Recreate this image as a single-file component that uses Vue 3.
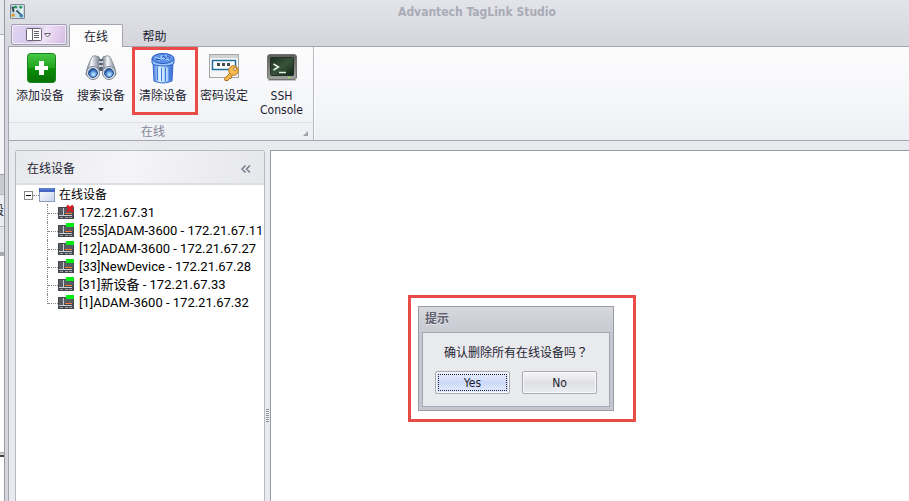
<script setup>
import { ref } from 'vue'

const title = 'Advantech TagLink Studio'
const expanded = ref(true)
const devices = [
  { name: '172.21.67.31', online: false },
  { name: '[255]ADAM-3600 - 172.21.67.119', online: true },
  { name: '[12]ADAM-3600 - 172.21.67.27', online: true },
  { name: '[33]NewDevice - 172.21.67.28', online: true },
  { name: '[31]新设备 - 172.21.67.33', online: true },
  { name: '[1]ADAM-3600 - 172.21.67.32', online: true },
]
</script>

<template>
  <div class="screen">
    <div class="behind" aria-hidden="true">
      <div class="behind-top"></div>
      <div class="behind-mid"></div>
      <div class="behind-head"></div>
      <div class="behind-row">段</div>
      <div class="behind-foot"></div>
      <div class="behind-list"></div>
      <div class="behind-end"></div>
    </div>

    <div class="window">
      <header class="titlebar">
        <svg class="app-icon" viewBox="0 0 14 14" aria-hidden="true">
          <rect x=".5" y=".5" width="13" height="13" rx="1" fill="#c3dfe9" stroke="#80878f" />
          <path d="M2 3h4l-3 4z" fill="#3a4850" stroke="#303e46" />
          <path d="M4 4l7 7M8 4h3v4" fill="none" stroke="#f5f7f8" stroke-width="2" />
          <path d="M6 6l5 5" stroke="#294858" stroke-width="1.5" />
          <circle cx="5" cy="3" r="1.3" fill="#219956" />
          <circle cx="10" cy="3" r="1.4" fill="#2c9555" />
          <circle cx="3" cy="10.500" r="1.6" fill="#e39b32" />
          <circle cx="10.5" cy="11" r="1.6" fill="#317eac" />
        </svg>
        <h1>{{ title }}</h1>
      </header>

      <nav class="tabs">
        <button class="app-menu" aria-label="Menu">
          <svg width="26" height="14" viewBox="0 0 26 14" aria-hidden="true">
            <rect x=".5" y=".5" width="15" height="12" rx="1" fill="#fdfcff" stroke="#68656f" />
            <path d="M6.500 1v11" stroke="#68656f" />
            <path d="M8 3.500h5M8 5.500h5M8 7.500h5M8 9.500h5" stroke="#68656f" />
            <path d="M18.500 5.500h6l-3 3.500z" fill="#fff" stroke="#68656f" />
          </svg>
        </button>
        <button class="tab active">在线</button>
        <button class="tab">帮助</button>
      </nav>

      <section class="ribbon">
        <div class="group">
          <div class="tools">
            <button class="tool">
              <svg viewBox="0 0 32 32" aria-hidden="true">
                <defs>
                  <linearGradient id="green" x2="0" y2="1">
                    <stop offset="0" stop-color="#48c848" /><stop offset=".48" stop-color="#22a41d" />
                    <stop offset=".52" stop-color="#0b8f09" /><stop offset="1" stop-color="#087006" />
                  </linearGradient>
                </defs>
                <rect x="3.500" y="1.500" width="28" height="29" rx="3" fill="url(#green)" stroke="#15841a" />
                <path d="M15 9h5v5h4v4h-4v5h-5v-5h-4v-4h4z" fill="#fff" />
              </svg>
              <span>添加设备</span>
            </button>
            <button class="tool">
              <svg viewBox="0 0 32 32" aria-hidden="true">
                <defs>
                  <linearGradient id="barrel"><stop offset="0" stop-color="#67717f" /><stop offset=".4" stop-color="#f5f7fa" /><stop offset="1" stop-color="#6c7786" /></linearGradient>
                  <radialGradient id="lens" cx=".55" cy=".65"><stop offset="0" stop-color="#d5efff" /><stop offset=".55" stop-color="#6ba8ea" /><stop offset="1" stop-color="#2d5ca8" /></radialGradient>
                </defs>
                <path d="M6 7q1-4 5-3 4 0 4 4l-1 15H1q0-6 5-16z" fill="url(#barrel)" stroke="#8b939e" />
                <path d="M26 7q-1-4-5-3-4 0-4 4l1 15h13q0-6-5-16z" fill="url(#barrel)" stroke="#8b939e" />
                <path d="M14.500 7h3v12h-3z" fill="#4f5865" />
                <path d="M14 10h4M14 14h4" stroke="#c3cad3" stroke-width="2" />
                <circle cx="8" cy="21" r="6.500" fill="#e4e9ee" stroke="#7b838f" />
                <circle cx="24" cy="21" r="6.500" fill="#e4e9ee" stroke="#7b838f" />
                <circle cx="8" cy="21" r="4.500" fill="url(#lens)" stroke="#2d538c" />
                <circle cx="24" cy="21" r="4.500" fill="url(#lens)" stroke="#2d538c" />
              </svg>
              <span>搜索设备</span>
              <i class="arrow"></i>
            </button>
            <button class="tool marked">
              <svg viewBox="0 0 32 32" aria-hidden="true">
                <defs>
                  <linearGradient id="bin"><stop offset="0" stop-color="#3f78dc" /><stop offset=".35" stop-color="#dcf3ff" /><stop offset=".65" stop-color="#8fc0fa" /><stop offset="1" stop-color="#2b5fcb" /></linearGradient>
                </defs>
                <path d="M6 11h20l-1 18q-9 4-18 0z" fill="url(#bin)" stroke="#3b6bd0" />
                <path d="M10.500 15v13M14.500 16v13M18.500 16v13M22.500 15v12" stroke="#4179dc" />
                <path d="M12 15v13M16 16v13M20 16v13" stroke="#e0f5ff" />
                <path d="M5 7v4q2 3 11 3t11-3V7z" fill="#9bcafa" stroke="#2f60c8" />
                <ellipse cx="16" cy="6.500" rx="11" ry="5" fill="#5d92e8" stroke="#2a59c2" />
                <path d="M8 5l5 2 2-4M12 9l4-3 6 2M18 3l4 3" fill="none" stroke="#b6dcfd" />
                <path d="M9 7l5 1M16 4l3 3M20 4l3 2" fill="none" stroke="#204bad" />
              </svg>
              <span>清除设备</span>
            </button>
            <button class="tool">
              <svg viewBox="0 0 32 32" aria-hidden="true">
                <rect x="1.500" y="2.500" width="29" height="23" fill="#f6f6f7" stroke="#a4a6aa" />
                <path d="M2 4.500h28" stroke="#d0d2d4" stroke-width="3" />
                <rect x="4.500" y="8.500" width="23" height="9" fill="#fff" stroke="#226f9d" stroke-width="1.500" />
                <path d="M9 11h3v3H9zM14 11h3v3h-3zM19 11h3v3h-3z" fill="#494b4e" />
                <path d="M22.500 20.500l-6 6 .5 2h3l1-2h2l1-3" fill="#f3b94b" stroke="#ae6d20" />
                <circle cx="25.500" cy="18.500" r="4.800" fill="#f5bd50" stroke="#b37627" />
                <circle cx="27" cy="17" r="1.500" fill="#fff9e9" stroke="#b37627" />
              </svg>
              <span>密码设定</span>
            </button>
            <button class="tool">
              <svg viewBox="0 0 32 32" aria-hidden="true">
                <defs>
                  <linearGradient id="term" y2="1"><stop offset="0" stop-color="#1d2c20" /><stop offset=".5" stop-color="#38543a" /><stop offset="1" stop-color="#142317" /></linearGradient>
                  <linearGradient id="case" x2="0" y2="1"><stop offset="0" stop-color="#5a5c5a" /><stop offset="1" stop-color="#a1a49f" /></linearGradient>
                </defs>
                <path d="M4 26h24l2 3H2z" fill="#c2c3c3" />
                <rect x="1.500" y="2.500" width="29" height="25" rx="2.500" fill="url(#case)" stroke="#707370" />
                <rect x="4.500" y="5.500" width="23" height="18" rx="1" fill="url(#term)" stroke="#253026" />
                <path d="M7.500 12l5 3-5 3" fill="none" stroke="#e6f2e5" stroke-width="1.500" />
                <path d="M13 20.500h7" stroke="#e6f2e5" stroke-width="1.500" />
                <circle cx="23" cy="25.500" r="1" fill="#91dc55" />
              </svg>
              <span>SSH<br />Console</span>
            </button>
          </div>
          <div class="caption">
            <span>在线</span>
            <svg class="launcher" viewBox="0 0 5 5" aria-hidden="true"><path d="M5 0v5H0z" /></svg>
          </div>
        </div>
      </section>

      <main class="body">
        <aside class="panel">
          <div class="panel-head">
            <h2>在线设备</h2>
            <button class="collapse" aria-label="Collapse">
              <svg width="10" height="8" viewBox="0 0 10 8" aria-hidden="true"><path d="M4.500 .5L1 4l3.500 3.500M9 .5L5.500 4 9 7.500" /></svg>
            </button>
          </div>
          <div class="tree">
            <div class="root">
              <button class="toggle" :aria-expanded="expanded" aria-label="在线设备" @click="expanded = !expanded">
                <svg width="9" height="9" viewBox="0 0 9 9" aria-hidden="true">
                  <rect x=".5" y=".5" width="8" height="8" />
                  <path d="M2 4.500h5" /><path v-if="!expanded" d="M4.500 2v5" />
                </svg>
              </button>
              <i class="dots"></i>
              <svg class="folder" viewBox="0 0 16 14" aria-hidden="true">
                <defs><linearGradient id="pane" y2="1"><stop offset="0" stop-color="#fff" /><stop offset="1" stop-color="#c5d4ea" /></linearGradient></defs>
                <rect x=".5" y=".5" width="15" height="13" fill="url(#pane)" stroke="#8c9cbd" />
                <path d="M0 0h16v4H0z" fill="#4164c1" /><path d="M1 1h14" stroke="#7895df" />
              </svg>
              <span>在线设备</span>
            </div>
            <ul v-if="expanded">
              <li v-for="d in devices" :key="d.name">
                <i class="branch"></i>
                <svg class="device" viewBox="0 0 16 16" aria-hidden="true">
                  <path d="M0 2h16v12H0z" fill="#45494d" />
                  <path d="M1 3h4v7H1zM6 3h9v5H6z" fill="#565c62" />
                  <path d="M5 3h1v7H5zM1 10h13v1H1z" fill="#c9ced3" />
                  <path d="M7 8h7v1H7z" fill="#f47a35" />
                  <path d="M2 12h3v1H2zM7 12h3v1H7zM11 12h3v1h-3z" fill="#9da3a8" />
                  <path v-if="d.online" d="M8 0h8v4H8z" fill="#00ef13" />
                  <path v-else d="M9 .5l6 6M15 .5l-6 6" stroke="#dd1a20" stroke-width="2.500" />
                </svg>
                <span>{{ d.name }}</span>
              </li>
            </ul>
          </div>
        </aside>
        <div class="splitter"><i></i></div>
        <section class="workspace">
          <div class="highlight">
            <div class="dialog" role="dialog" aria-labelledby="dialog-title">
              <h2 id="dialog-title">提示</h2>
              <div class="dialog-body">
                <p>确认删除所有在线设备吗<span class="mark">？</span></p>
                <div class="actions">
                  <button class="btn primary">Yes</button>
                  <button class="btn">No</button>
                </div>
              </div>
            </div>
          </div>
        </section>
      </main>
    </div>
  </div>
</template>

<style>
body { margin: 0; overflow: hidden; }
</style>

<style scoped>
* { box-sizing: border-box; }
button { margin: 0; padding: 0; border: 0; background: none; color: inherit; font: inherit; }
h1, h2, p, ul { margin: 0; padding: 0; }
svg { display: block; flex: none; }
.screen {
  display: flex;
  height: 100vh;
  overflow: hidden;
  color: #1e1e32;
  font: 12px/14px "DejaVu Sans Condensed", "Noto Sans CJK SC", sans-serif;
}
.behind { display: flex; flex: none; flex-direction: column; width: 4px; overflow: hidden; background: #fff; }
.behind-top { height: 35px; border-bottom: 1px solid #b0b1b8; background: #e6e7ec; }
.behind-mid { height: 139px; background: #f6f6f9; }
.behind-head { height: 21px; border-top: 1px solid #a0a1ac; border-bottom: 1px solid #b3b4bc; background: #cbccd3; }
.behind-row { display: flex; align-items: center; justify-content: flex-end; height: 31px; background: #ecedf1; }
.behind-foot { height: 30px; border-top: 1px solid #b6b7c0; border-bottom: 4px solid #a9aab4; background: #e7e8ed; }
.behind-list { height: 196px; }
.behind-end { height: 5px; border-top: 1px solid #aaa; border-bottom: 2px solid #444; background: #d5d1ca; }

.window {
  display: flex;
  flex: 1;
  flex-direction: column;
  min-width: 0;
  padding-left: 3px;
  border-left: 1px solid #9899a6;
  background: linear-gradient(#e3e4e9, #d6d7dc 44px);
}
.titlebar { display: flex; align-items: center; flex: none; height: 24px; padding: 0 2px; }
.app-icon { width: 15px; height: 15px; margin-bottom: 2px; }
h1 { flex: 1; padding-left: 22px; color: #a9abb7; font-size: 12px; line-height: 22px; text-align: center; }
.tabs { display: flex; flex: none; height: 23px; padding-left: 3px; border-bottom: 1px solid #a4a5b0; }
.app-menu {
  display: flex;
  align-items: center;
  justify-content: center;
  width: 56px;
  height: 21px;
  border: 1px solid #a09fb2;
  border-radius: 2px;
  background: linear-gradient(110deg, #e2d6f3, #d5c6ea 40%, #eee2f6 60%, #d5b8e2);
  box-shadow: inset 0 0 0 1px #f1eaf8;
}
.tab { width: 57px; height: 23px; padding-top: 2px; }
.tab.active {
  width: 54px;
  margin-left: 2px;
  margin-right: 3px;
  border: 1px solid #a4a5b0;
  border-bottom: 0;
  border-radius: 2px 2px 0 0;
  background: #fcfcfd;
}
.ribbon {
  display: flex;
  flex: none;
  height: 94px;
  border-bottom: 1px solid #a4a5b0;
  border-left: 1px solid #a4a5b0;
  background: linear-gradient(#fcfcfd, #f5f6f8 60%, #eeeff3);
}
.group { display: flex; flex-direction: column; width: 305px; border-right: 1px solid #b6b7c0; box-shadow: 1px 0 #fff; }
.tools { display: flex; flex: 1; padding-left: 1px; }
.tool { display: flex; flex-direction: column; align-items: center; width: 60px; padding-top: 5px; }
.tool svg { width: 32px; height: 32px; margin-bottom: 5px; }
.tool span { white-space: nowrap; }
.tool.marked { width: 66px; height: 68px; padding: 2px 4px 0 0; border: 3px solid #e94b46; }
.tool:nth-child(2) { width: 62px; }
.tool:nth-child(4) { width: 52px; }
.tool:nth-child(5) { width: 63px; }
.arrow { margin-top: 5px; border: 3px solid transparent; border-top-color: #1e1e32; border-bottom: 0; }
.caption {
  display: flex;
  align-items: center;
  justify-content: space-between;
  height: 18px;
  padding-left: 132px;
  padding-right: 5px;
  border-top: 1px solid #e0e1e6;
  color: #85869a;
}
.launcher { width: 5px; height: 5px; margin-top: 4px; fill: #a0a1ad; }

.body { display: flex; flex: 1; min-height: 0; padding: 9px 0 0 6px; border-left: 1px solid #a4a5b0; background: #e9eaee; }
.panel {
  display: flex;
  flex: none;
  flex-direction: column;
  width: 250px;
  border: 1px solid #b9bac3;
  border-bottom: 0;
  border-radius: 3px 3px 0 0;
}
.panel-head {
  display: flex;
  align-items: center;
  justify-content: space-between;
  flex: none;
  height: 34px;
  padding: 4px 13px 0 11px;
  border-bottom: 2px solid #dddee3;
  background: linear-gradient(100deg, #e8e9ed, #f5f5f7 45%, #e6e7eb);
}
.panel-head h2 { font: inherit; }
.collapse path { fill: none; stroke: #777889; stroke-width: 1.5; }
.tree { flex: 1; overflow: hidden; padding: 1px 1px 0 8px; background: #fff; color: #000; }
.root { display: flex; align-items: center; height: 18px; }
.toggle rect { fill: #fff; stroke: #888; }
.toggle path { stroke: #000; }
.dots { width: 6px; border-top: 1px dotted #888; }
.folder { width: 16px; height: 14px; margin-right: 4px; }
ul { padding-left: 23px; list-style: none; }
li {
  display: flex;
  align-items: center;
  height: 18px;
  font-family: Roboto, "Noto Sans CJK SC", sans-serif;
  font-size: 13px;
  white-space: nowrap;
}
.branch { position: relative; flex: none; width: 11px; height: 18px; border-left: 1px dotted #888; }
.branch::after { content: ""; position: absolute; top: 9px; left: 0; width: 10px; border-top: 1px dotted #888; }
li:last-child .branch { align-self: flex-start; height: 10px; }
.device { width: 16px; height: 16px; margin-right: 5px; }
.splitter { display: flex; flex: none; align-items: center; justify-content: center; width: 5px; padding-top: 180px; }
.splitter i { width: 3px; height: 13px; background: repeating-linear-gradient(#8d8e99 0 1px, #f6f6f8 1px 2px); }
.workspace { flex: 1; min-width: 0; padding: 144px 0 0 137px; border-top: 1px solid #9899a6; border-left: 1px solid #9899a6; background: #fff; }
.highlight { width: 228px; padding: 8px 19px 8px 7px; border: 3px solid #e94b46; }
.dialog { padding: 0 3px 3px; border: 1px solid #9b9ca9; background: linear-gradient(#d8d9de, #c5c6cf 30px); }
.dialog h2 { padding: 0 3px; color: #5e5f70; font-size: 12px; line-height: 25px; text-shadow: 0 1px #e8e9ed; }
.dialog-body { padding: 12px; border: 1px solid #a6a7b2; background: #e9eaee; }
.dialog p { height: 14px; margin-bottom: 12px; text-align: center; white-space: nowrap; }
.mark { font-family: "Noto Sans CJK TC", sans-serif; }
.actions { display: flex; gap: 12px; }
.btn {
  flex: 1;
  height: 23px;
  border: 1px solid #a9aab5;
  border-radius: 2px;
  background: linear-gradient(#f7f7f9, #e0e1e6 50%, #ebecef);
  box-shadow: inset 0 0 0 1px #f8f8fa;
}
.btn.primary { background: linear-gradient(#edf1fd, #cdd9f8 50%, #e4ecfd); outline: 1px dotted #1e1e32; outline-offset: -4px; }
</style>
